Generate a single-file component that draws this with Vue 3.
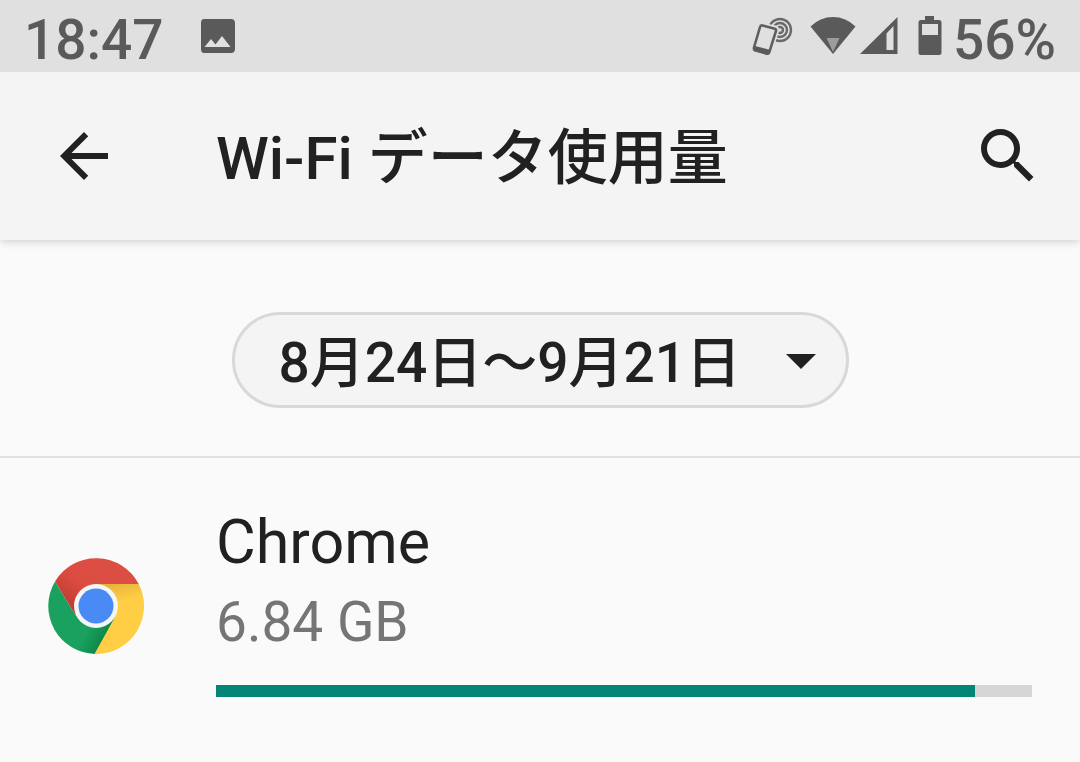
<script setup>
import { ref } from 'vue'

const periods = ['8月24日～9月21日']
const period = ref(periods[0])

const apps = [{ name: 'Chrome', usage: '6.84 GB', percent: 93 }]
</script>

<template>
  <div class="screen">
    <div class="status-bar">
      <span class="clock">18:47</span>
      <svg class="photo" width="36" height="36" viewBox="0 0 36 36" aria-hidden="true">
        <path fill-rule="evenodd" d="M4 1H31Q35 1 35 5V31Q35 35 31 35H4Q1 35 1 31V5Q1 1 4 1ZM4.500 29H30.500L22 18L15.500 26.500L11 21Z" />
      </svg>
      <svg class="nfc" width="42" height="42" viewBox="0 0 42 42" aria-hidden="true">
        <g fill="none" stroke="#6a6a6a" stroke-width="2.400">
          <circle cx="28" cy="15" r="11" />
          <circle cx="28" cy="15" r="7" />
          <circle cx="28" cy="15" r="3" />
        </g>
        <path d="M9.500 10L23 13Q25 13.500 24.500 16L17.500 37Q17 39 15 38.500L3 35Q1 34.500 1.500 32L7.500 11Q8 9 9.500 10Z" fill="#e0e0e0" stroke="#e0e0e0" stroke-width="5" />
        <path d="M10.500 10.500L22 13.500Q24.500 14 24 16L17.500 36.500Q17 39 15 38.500L4 35.500Q1.500 35 2 32.500L8 12Q8.500 10 10.500 10.500Z" fill="#e0e0e0" stroke="#5f5f5f" stroke-width="2.600" />
        <path d="M3 31L18.500 35L17 39L15 40L2 36Z" />
      </svg>
      <svg class="wifi" width="46" height="38" viewBox="0 0 46 38" aria-hidden="true">
        <path d="M0.500 9.500Q10 0 23 0T45.500 9.500L23 37Z" />
        <path d="M16.500 21H29.500L23 35Z" fill="#9c9c9c" />
      </svg>
      <svg class="signal" width="38" height="38" viewBox="0 0 38 38" aria-hidden="true">
        <path fill-rule="evenodd" d="M0 37L37.500 0V37ZM26.500 16.500V33H33.500V9Z" />
      </svg>
      <svg class="battery" width="24" height="40" viewBox="0 0 24 40" aria-hidden="true">
        <path fill-rule="evenodd" d="M7 0H16V4H21Q23.500 4 23.500 6.500V36.500Q23.500 39 21 39H3Q0.500 39 0.500 36.500V6.500Q0.500 4 3 4H7ZM4 8V19H20V8Z" />
      </svg>
      <span>56%</span>
    </div>

    <header class="app-bar">
      <button class="icon-button" type="button" aria-label="戻る">
        <svg width="72" height="72" viewBox="0 0 24 24"><path d="M20 11H7.830l5.590-5.590L12 4l-8 8 8 8 1.410-1.410L7.830 13H20v-2z" /></svg>
      </button>
      <h1>Wi-Fi データ使用量</h1>
      <button class="icon-button" type="button" aria-label="検索">
        <svg width="72" height="72" viewBox="0 0 24 24"><path d="M15.500 14h-.790l-.280-.270A6.471 6.471 0 0 0 16 9.500 6.500 6.500 0 1 0 9.500 16c1.610 0 3.090-.590 4.230-1.570l.270.280v.790l5 4.990L20.490 19l-4.990-5zm-6 0C7.010 14 5 11.990 5 9.500S7.010 5 9.500 5 14 7.010 14 9.500 11.990 14 9.500 14z" /></svg>
      </button>
    </header>

    <main>
      <div class="cycle">
        <div class="chip">
          <select v-model="period" aria-label="期間">
            <option v-for="p in periods" :key="p" :value="p">{{ p }}</option>
          </select>
          <svg width="72" height="72" viewBox="0 0 24 24" aria-hidden="true"><path d="M7 10l5 5 5-5z" /></svg>
        </div>
      </div>

      <ul class="apps">
        <li v-for="app in apps" :key="app.name" class="app">
          <svg class="logo" width="96" height="96" viewBox="0 0 96 96" aria-hidden="true">
            <defs>
              <linearGradient id="red" x1="16" y1="50" x2="44" y2="14" gradientUnits="userSpaceOnUse">
                <stop offset="0" stop-color="#b93a30" />
                <stop offset=".6" stop-color="#da4a3f" />
                <stop offset="1" stop-color="#dc4e43" />
              </linearGradient>
              <linearGradient id="green" x1="58" y1="77" x2="42" y2="68" gradientUnits="userSpaceOnUse">
                <stop offset="0" stop-color="#0e8849" />
                <stop offset="1" stop-color="#1aa15f" />
              </linearGradient>
              <linearGradient id="yellow" x1="66" y1="26" x2="70" y2="44" gradientUnits="userSpaceOnUse">
                <stop offset="0" stop-color="#e8b53c" />
                <stop offset="1" stop-color="#ffce45" />
              </linearGradient>
            </defs>
            <path d="M7 23.500A48 48 0 0 0 47 96L68 59L48 48L28 58Z" fill="url(#green)" />
            <path d="M48 26H90.700A48 48 0 0 1 46.500 96L67 59Z" fill="url(#yellow)" />
            <path d="M7 23.500A48 48 0 0 1 90.700 26H48L28 58Z" fill="url(#red)" />
            <circle cx="48" cy="48" r="22" fill="#f3f5f6" />
            <circle cx="48" cy="48" r="17.500" fill="#4a8af4" />
          </svg>
          <div class="details">
            <div class="name">{{ app.name }}</div>
            <div class="usage">{{ app.usage }}</div>
            <progress :value="app.percent" max="100" :aria-label="app.name"></progress>
          </div>
        </li>
      </ul>
    </main>
  </div>
</template>

<style>
body {
  margin: 0;
  background: #fafafa;
}
</style>

<style scoped>
.screen {
  color: #212121;
  font-family: Roboto, "Noto Sans CJK JP", sans-serif;
}

svg {
  display: block;
  flex: none;
  fill: currentColor;
}

.status-bar {
  position: relative;
  z-index: 1;
  display: flex;
  align-items: center;
  height: 72px;
  padding: 0 24px;
  background: #e0e0e0;
  color: #5a5a5a;
  font-size: 55px;
  font-weight: 500;
  line-height: 80px;
}

.status-bar span {
  padding-top: 8px;
}

.clock {
  margin-right: 36px;
}

.nfc {
  margin-left: auto;
  margin-right: 16px;
}

.signal {
  margin: 0 20px 0 4px;
}

.battery {
  margin-right: 11px;
}

.app-bar {
  position: relative;
  display: flex;
  align-items: center;
  height: 168px;
  padding: 0 36px 0 48px;
  background: #f4f4f4;
  box-shadow: 0 2px 8px rgba(0, 0, 0, 0.16);
}

h1 {
  flex: 1;
  margin: 0 0 0 96px;
  padding-top: 6px;
  font-size: 60px;
  font-weight: 500;
  line-height: 88px;
  white-space: nowrap;
}

.icon-button {
  padding: 0;
  border: 0;
  background: none;
  color: inherit;
}

.cycle {
  display: flex;
  justify-content: center;
  padding: 72px 24px 48px;
  border-bottom: 2px solid #e2e2e2;
}

.chip {
  position: relative;
}

.chip select {
  appearance: none;
  display: block;
  height: 96px;
  margin: 0;
  padding: 6px 104px 0 44px;
  border: 3px solid #d8d8d8;
  border-radius: 48px;
  background: #f4f4f4;
  color: inherit;
  font-family: inherit;
  font-size: 55px;
  font-weight: 500;
}

.chip svg {
  position: absolute;
  top: 12px;
  right: 12px;
  pointer-events: none;
}

.apps {
  margin: 0;
  padding: 0;
  list-style: none;
}

.app {
  display: flex;
  align-items: flex-start;
  padding: 44px 48px;
}

.logo {
  margin-top: 56px;
}

.details {
  flex: 1;
  margin-left: 72px;
}

.name {
  font-size: 61px;
  line-height: 80px;
}

.usage {
  margin-top: 4px;
  color: #757575;
  font-size: 55px;
  line-height: 72px;
}

progress {
  appearance: none;
  display: block;
  width: 100%;
  height: 12px;
  margin-top: 27px;
  border: 0;
  background: #d6d6d6;
}

progress::-webkit-progress-bar {
  background: #d6d6d6;
}

progress::-webkit-progress-value {
  background: #048576;
}
</style>
